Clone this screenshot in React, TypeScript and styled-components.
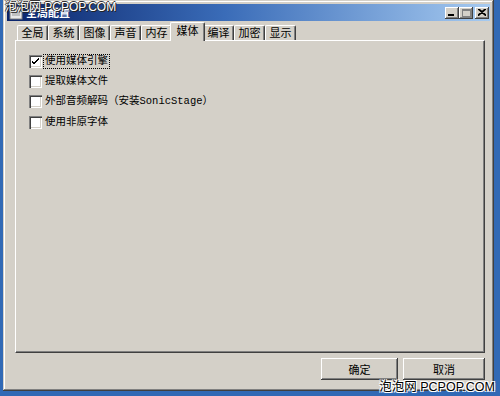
import React from 'react';
import styled, { createGlobalStyle } from 'styled-components';

const Global = createGlobalStyle`
  html, body { margin: 0; padding: 0; }
  body {
    width: 500px;
    height: 396px;
    overflow: hidden;
    background: #3169b5;
    font-family: "Noto Sans CJK SC", sans-serif;
  }
`;

const Desktop = styled.div`
  position: relative;
  width: 500px;
  height: 396px;
  padding-left: 3px;
  box-sizing: border-box;
`;

const Window = styled.div`
  width: 491px;
  height: 391px;
  box-sizing: border-box;
  background: #d4d0c8;
  padding: 4px 4px 4px 4px;
  box-shadow: inset -1px -1px #404040, inset 1px 1px #d4d0c8,
    inset -2px -2px #808080, inset 2px 2px #ffffff;
  display: flex;
  flex-direction: column;
`;

const TitleBar = styled.div`
  height: 17px;
  flex: none;
  display: flex;
  align-items: center;
  padding: 0 0 0 2px;
  background: linear-gradient(to right, #0a246a 0%, #3a6cb8 45%, #a6caf0 100%);
`;

const TitleText = styled.span`
  color: #fff;
  font-weight: bold;
  font-size: 11px;
  line-height: 17px;
  margin-left: 3px;
  flex: 1;
`;

const CaptionButton = styled.div<{ $gap?: number }>`
  width: 14px;
  height: 12px;
  margin-left: ${(p) => p.$gap ?? 0}px;
  background: #d4d0c8;
  box-shadow: inset -1px -1px #404040, inset 1px 1px #ffffff,
    inset -2px -2px #808080;
  display: flex;
  align-items: center;
  justify-content: center;
`;

const Body = styled.div`
  flex: 1;
  display: flex;
  flex-direction: column;
  padding: 1px 5px 0 8px;
`;

const TabRow = styled.div`
  height: 18px;
  flex: none;
  display: flex;
  align-items: flex-end;
  padding-left: 2px;
  position: relative;
  z-index: 1;
`;

const Tab = styled.div<{ $active?: boolean }>`
  box-sizing: border-box;
  width: ${(p) => (p.$active ? 35 : 31)}px;
  height: ${(p) => (p.$active ? 19 : 15)}px;
  margin: ${(p) => (p.$active ? '0 -2px -1px -2px' : '0')};
  position: relative;
  z-index: ${(p) => (p.$active ? 2 : 1)};
  background: #d4d0c8;
  border-top: 1px solid #ffffff;
  border-left: 1px solid #ffffff;
  border-right: 1px solid #404040;
  border-radius: 2px 2px 0 0;
  box-shadow: inset -1px 0 #808080;
  font-size: 11px;
  line-height: ${(p) => (p.$active ? 15 : 13)}px;
  text-align: center;
  color: #000;
  white-space: nowrap;
`;

const Panel = styled.div`
  height: 313px;
  flex: none;
  box-sizing: border-box;
  border-top: 1px solid #ffffff;
  border-left: 1px solid #ffffff;
  border-right: 1px solid #404040;
  border-bottom: 1px solid #404040;
  box-shadow: inset -1px -1px #808080;
  padding: 10px 0 0 13px;
  display: flex;
  flex-direction: column;
`;

const Row = styled.div`
  height: 20.4px;
  display: flex;
  align-items: center;
`;

const Box = styled.div`
  width: 13px;
  height: 13px;
  box-sizing: border-box;
  background: #fff;
  box-shadow: inset 1px 1px #808080, inset 2px 2px #404040,
    inset -1px -1px #ffffff, inset -2px -2px #d4d0c8;
  display: flex;
  align-items: center;
  justify-content: center;
`;

const Label = styled.span<{ $focus?: boolean }>`
  margin-left: 2px;
  padding: 0 1px;
  font-family: "Liberation Mono", "Noto Sans CJK SC", monospace;
  font-size: 10.5px;
  line-height: 13px;
  color: #000;
  outline: ${(p) => (p.$focus ? '1px dotted #000' : 'none')};
  white-space: nowrap;
`;

const ButtonRow = styled.div`
  display: flex;
  justify-content: flex-end;
  gap: 5px;
  margin-top: 5px;
`;

const Button = styled.div<{ $w: number }>`
  width: ${(p) => p.$w}px;
  height: 22px;
  box-sizing: border-box;
  background: #d4d0c8;
  box-shadow: inset -1px -1px #404040, inset 1px 1px #ffffff,
    inset -2px -2px #808080;
  font-size: 11px;
  line-height: 22px;
  text-align: center;
  color: #000;
`;

const WatermarkTop = styled.div`
  position: absolute;
  left: 5px;
  top: 0px;
  font-size: 12px;
  line-height: 14px;
  color: #fff;
  white-space: nowrap;
  text-shadow: 1px 1px 0 #222, -1px 0 0 #333, 0 -1px 0 #333;
  font-family: "Liberation Sans", "Noto Sans CJK SC", sans-serif;
`;

const WatermarkBottom = styled.div`
  position: absolute;
  right: 5px;
  bottom: 1px;
  font-size: 12.5px;
  line-height: 15px;
  color: #000;
  white-space: nowrap;
  text-shadow: 1px 1px 0 #fff, -1px -1px 0 #fff, 1px -1px 0 #fff, -1px 1px 0 #fff;
  font-family: "Liberation Sans", "Noto Sans CJK SC", sans-serif;
`;

const tabs = ['全局', '系统', '图像', '声音', '内存', '媒体', '编译', '加密', '显示'];
const options = [
  { text: '使用媒体引擎', checked: true },
  { text: '提取媒体文件', checked: false },
  { text: '外部音频解码（安装SonicStage）', checked: false },
  { text: '使用非原字体', checked: false },
];

const AppIcon = () => (
  <svg width="14" height="14" viewBox="0 0 14 14">
    <rect x="1" y="1" width="12" height="12" fill="#e8e8e8" stroke="#808080" />
    <rect x="3" y="4" width="8" height="6" fill="#c0c0c0" />
    <rect x="1.5" y="1.5" width="11" height="2" fill="#fff" />
  </svg>
);

export default function App() {
  return (
    <Desktop>
      <Global />
      <Window>
        <TitleBar>
          <AppIcon />
          <TitleText>全局配置</TitleText>
          <CaptionButton>
            <svg width="8" height="7" viewBox="0 0 8 7">
              <rect x="0" y="5" width="6" height="2" fill="#000" />
            </svg>
          </CaptionButton>
          <CaptionButton>
            <svg width="9" height="8" viewBox="0 0 9 8">
              <rect x="0.5" y="0.5" width="8" height="7" fill="none" stroke="#808080" />
              <rect x="0" y="0" width="9" height="2" fill="#808080" />
            </svg>
          </CaptionButton>
          <CaptionButton $gap={2}>
            <svg width="8" height="7" viewBox="0 0 8 7">
              <path d="M0 0 L8 7 M1 0 L8 6 M8 0 L0 7 M7 0 L0 6" stroke="#000" strokeWidth="1.2" />
            </svg>
          </CaptionButton>
          <div style={{ width: 1 }} />
        </TitleBar>
        <Body>
          <TabRow>
            {tabs.map((t) => (
              <Tab key={t} $active={t === '媒体'}>
                {t}
              </Tab>
            ))}
          </TabRow>
          <Panel>
            {options.map((o, i) => (
              <Row key={o.text}>
                <Box>
                  {o.checked && (
                    <svg width="7" height="7" viewBox="0 0 7 7">
                      <path d="M0 3 L2 5 L7 0 M0 4 L2 6 L7 1" stroke="#000" strokeWidth="1" fill="none" />
                    </svg>
                  )}
                </Box>
                <Label $focus={i === 0}>{o.text}</Label>
              </Row>
            ))}
          </Panel>
          <ButtonRow>
            <Button $w={77}>确定</Button>
            <Button $w={82}>取消</Button>
          </ButtonRow>
        </Body>
      </Window>
      <WatermarkTop>泡泡网 PCPOP.COM</WatermarkTop>
      <WatermarkBottom>泡泡网 PCPOP.COM</WatermarkBottom>
    </Desktop>
  );
}
